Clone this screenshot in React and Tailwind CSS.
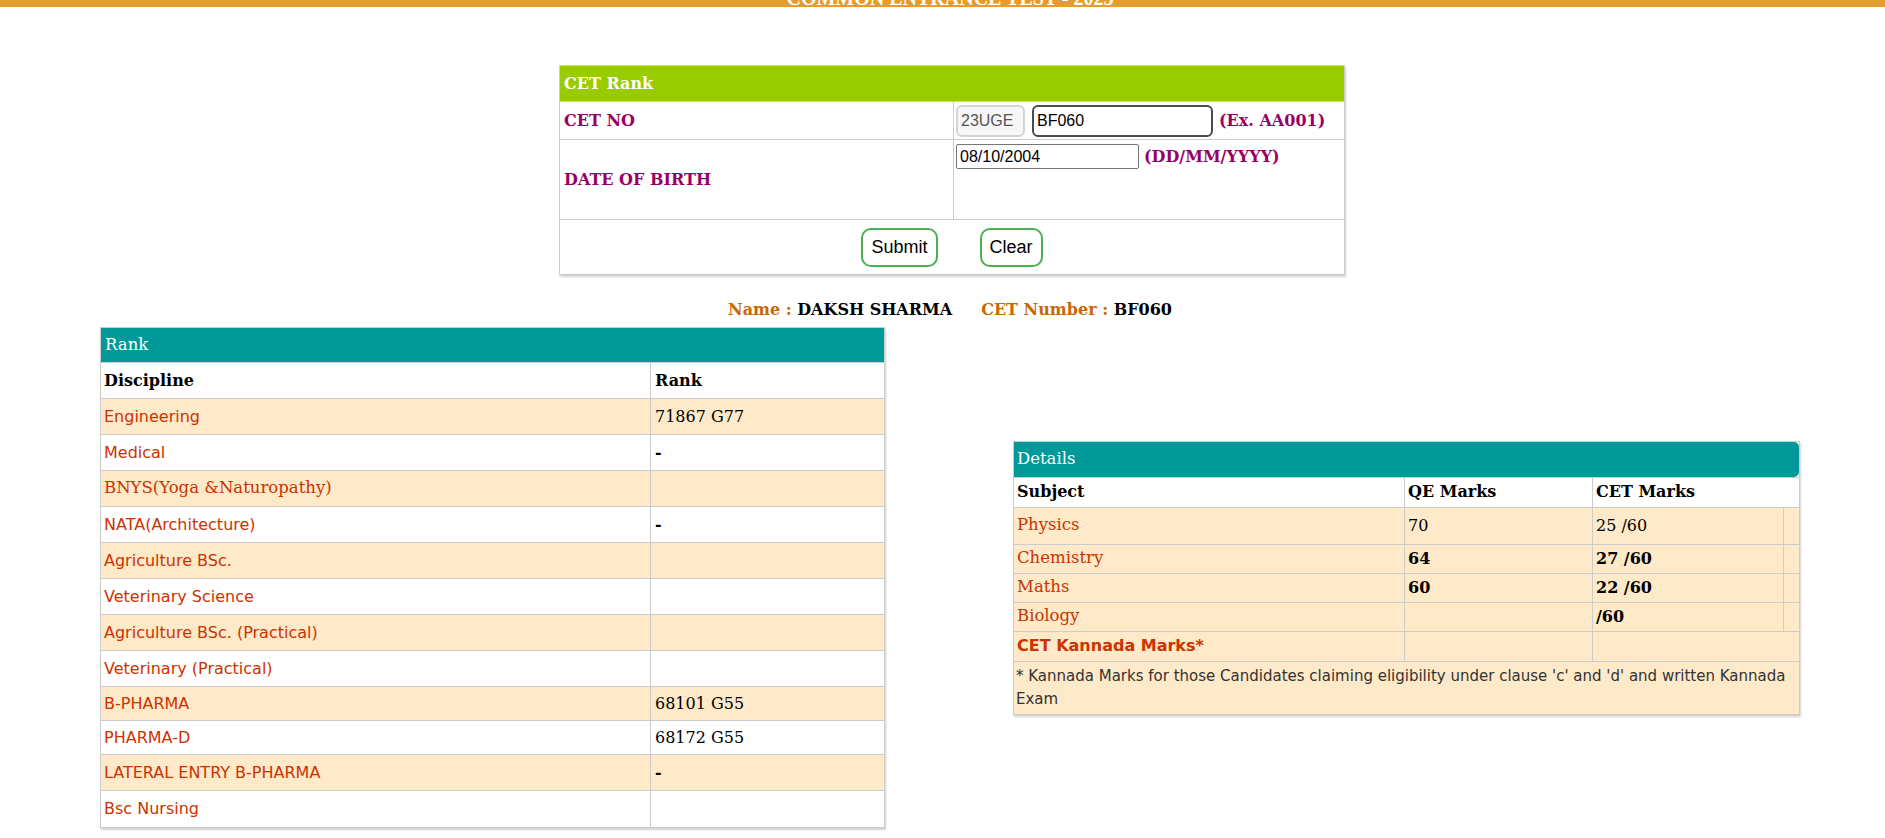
import React from "react";

const serif = "font-['DejaVu_Serif',serif]";
const sans = "font-['DejaVu_Sans',Verdana,sans-serif]";
const arial = "font-['Liberation_Sans',Arial,sans-serif]";

const ranks = [
  { name: "Engineering", rank: "71867 G77", h: "h-[36px]" },
  { name: "Medical", rank: "-", bold: true, h: "h-[36px]" },
  { name: "BNYS(Yoga &Naturopathy)", rank: "", serif: true, h: "h-[36px]" },
  { name: "NATA(Architecture)", rank: "-", bold: true, h: "h-[36px]" },
  { name: "Agriculture BSc.", rank: "", h: "h-[36px]" },
  { name: "Veterinary Science", rank: "", h: "h-[36px]" },
  { name: "Agriculture BSc. (Practical)", rank: "", h: "h-[36px]" },
  { name: "Veterinary (Practical)", rank: "", h: "h-[36px]" },
  { name: "B-PHARMA", rank: "68101 G55", h: "h-[34px]" },
  { name: "PHARMA-D", rank: "68172 G55", h: "h-[34px]" },
  { name: "LATERAL ENTRY B-PHARMA", rank: "-", bold: true, h: "h-[36px]" },
  { name: "Bsc Nursing", rank: "", h: "h-[37px]" },
];

const marks = [
  { subject: "Physics", qe: "70", cet: "25 /60", bold: false, h: "h-[37px]" },
  { subject: "Chemistry", qe: "64", cet: "27 /60", bold: true, h: "h-[29px]" },
  { subject: "Maths", qe: "60", cet: "22 /60", bold: true, h: "h-[29px]" },
  { subject: "Biology", qe: "", cet: "/60", bold: true, h: "h-[29px]" },
];

function RankForm() {
  return (
    <table className="mx-auto w-[786px] table-fixed border-collapse border border-[#ccc] shadow-[1px_2px_2px_rgba(0,0,0,0.18)]">
      <colgroup>
        <col className="w-[394px]" />
        <col />
      </colgroup>
      <tbody>
        <tr className="h-[36px] bg-[#99cc00]">
          <td colSpan={2} className={`${serif} px-[4px] text-[16px] font-bold text-white`}>
            CET Rank
          </td>
        </tr>
        <tr className="h-[38px]">
          <td className={`${serif} border border-[#ccc] px-[4px] text-[16px] font-bold text-[#990066]`}>
            CET NO
          </td>
          <td className="border border-[#ccc] pl-[2px]">
            <div className="flex items-center">
              <input
                readOnly
                value="23UGE"
                className={`${arial} h-[32px] w-[69px] rounded-[6px] border-2 border-[#d4d4d4] bg-[#f7f7f7] px-[3px] text-[16px] text-[#555] outline-none`}
              />
              <input
                readOnly
                value="BF060"
                className={`${arial} ml-[7px] h-[32px] w-[181px] rounded-[6px] border-2 border-[#4a4a4a] bg-white px-[3px] text-[16px] text-black outline-none`}
              />
              <span className={`${serif} ml-[6px] text-[16px] font-bold text-[#990066]`}>
                (Ex. AA001)
              </span>
            </div>
          </td>
        </tr>
        <tr className="h-[80px]">
          <td className={`${serif} border border-[#ccc] px-[4px] text-[16px] font-bold text-[#990066]`}>
            DATE OF BIRTH
          </td>
          <td className="border border-[#ccc] pl-[2px] pt-[4px] align-top">
            <div className="flex items-center">
              <input
                readOnly
                value="08/10/2004"
                className={`${arial} h-[25px] w-[183px] rounded-[2px] border border-[#767676] bg-white px-[3px] text-[16px] text-black outline-none`}
              />
              <span className={`${serif} ml-[5px] text-[16px] font-bold text-[#990066]`}>
                (DD/MM/YYYY)
              </span>
            </div>
          </td>
        </tr>
        <tr className="h-[55px]">
          <td colSpan={2} className="border border-[#ccc]">
            <div className="flex justify-center gap-[42px]">
              <button className={`${arial} h-[39px] rounded-[10px] border-2 border-[#4caf50] bg-white px-[8px] text-[18px] text-black`}>
                Submit
              </button>
              <button className={`${arial} h-[39px] rounded-[10px] border-2 border-[#4caf50] bg-white px-[8px] text-[18px] text-black`}>
                Clear
              </button>
            </div>
          </td>
        </tr>
      </tbody>
    </table>
  );
}

function RankTable() {
  return (
    <table className="w-[785px] table-fixed border-collapse border border-[#ccc] shadow-[1px_2px_2px_rgba(0,0,0,0.18)]">
      <colgroup>
        <col className="w-[550px]" />
        <col />
      </colgroup>
      <tbody>
        <tr className="h-[35px] bg-[#009999]">
          <td colSpan={2} className={`${serif} px-[4px] text-[16.5px] text-white`}>
            Rank
          </td>
        </tr>
        <tr className="h-[36px] bg-white">
          <td className={`${serif} border border-[#ccc] px-[3px] text-[16px] font-bold text-black`}>
            Discipline
          </td>
          <td className={`${serif} border border-[#ccc] px-[4px] text-[16px] font-bold text-black`}>
            Rank
          </td>
        </tr>
        {ranks.map((r, i) => (
          <tr key={r.name} className={`${r.h} ${i % 2 === 0 ? "bg-[#fee9c8]" : "bg-white"}`}>
            <td
              className={`${r.serif ? `${serif} text-[16.5px]` : `${sans} text-[16px]`} border border-[#ccc] px-[3px] text-[#cc3300]`}
            >
              {r.name}
            </td>
            <td
              className={`${serif} border border-[#ccc] px-[4px] text-[16px] text-black ${r.bold ? "font-bold" : ""}`}
            >
              {r.rank}
            </td>
          </tr>
        ))}
      </tbody>
    </table>
  );
}

function DetailsTable() {
  return (
    <table className="w-[787px] table-fixed border-collapse border border-[#ccc] shadow-[1px_2px_2px_rgba(0,0,0,0.18)]">
      <colgroup>
        <col className="w-[391px]" />
        <col className="w-[188px]" />
        <col className="w-[191px]" />
        <col />
      </colgroup>
      <tbody>
        <tr className="h-[35px]">
          <td colSpan={4} className="p-0">
            <div className={`${serif} flex h-[35px] items-center rounded-r-[5px] bg-[#009999] px-[3px] text-[16.5px] text-white`}>
              Details
            </div>
          </td>
        </tr>
        <tr className="h-[30px] bg-white">
          <td className={`${serif} border border-[#ccc] px-[3px] text-[16px] font-bold text-black`}>
            Subject
          </td>
          <td className={`${serif} border border-[#ccc] px-[3px] text-[16px] font-bold text-black`}>
            QE Marks
          </td>
          <td colSpan={2} className={`${serif} border border-[#ccc] px-[3px] text-[16px] font-bold text-black`}>
            CET Marks
          </td>
        </tr>
        {marks.map((m) => (
          <tr key={m.subject} className={`${m.h} bg-[#fee9c8]`}>
            <td className={`${serif} border border-[#ccc] px-[3px] text-[16.5px] text-[#cc3300]`}>
              {m.subject}
            </td>
            <td className={`${serif} border border-[#ccc] px-[3px] text-[16px] text-black ${m.bold ? "font-bold" : ""}`}>
              {m.qe}
            </td>
            <td className={`${serif} border border-[#ccc] px-[3px] text-[16px] text-black ${m.bold ? "font-bold" : ""}`}>
              {m.cet}
            </td>
            <td className="border border-[#ccc]"></td>
          </tr>
        ))}
        <tr className="h-[30px] bg-[#fee9c8]">
          <td className={`${sans} border border-[#ccc] px-[3px] text-[16px] font-bold text-[#cc3300]`}>
            CET Kannada Marks*
          </td>
          <td className="border border-[#ccc]"></td>
          <td colSpan={2} className="border border-[#ccc]"></td>
        </tr>
        <tr className="bg-[#fee9c8]">
          <td colSpan={4} className={`${sans} border border-[#ccc] px-[2px] py-[3px] text-[15px] leading-[23px] text-[#333]`}>
            * Kannada Marks for those Candidates claiming eligibility under clause 'c' and 'd' and written Kannada Exam
          </td>
        </tr>
      </tbody>
    </table>
  );
}

export default function App() {
  return (
    <div className="min-h-screen bg-white pb-[12px]">
      <div className="flex h-[7px] justify-center overflow-hidden bg-[#e69b2e]">
        <div className="ml-[15px] mt-[-12px] font-['Liberation_Serif',serif] text-[20px] font-bold leading-[20px] text-white">
          COMMON ENTRANCE TEST - 2023
        </div>
      </div>

      <div className="ml-[100px] w-[1700px]">
        <div className="mt-[58px] pl-[4px]">
          <RankForm />
        </div>

        <div className={`${serif} mb-[5px] mt-[23px] flex h-[24px] items-center justify-center text-[16px] font-bold leading-[24px]`}>
          <span className="text-[#cc6600]">Name :&nbsp;</span>
          <span className="text-black">DAKSH SHARMA</span>
          <span className="ml-[29px] text-[#cc6600]">CET Number :&nbsp;</span>
          <span className="text-black">BF060</span>
        </div>

        <div className="flex items-center justify-between">
          <RankTable />
          <DetailsTable />
        </div>
      </div>
    </div>
  );
}
